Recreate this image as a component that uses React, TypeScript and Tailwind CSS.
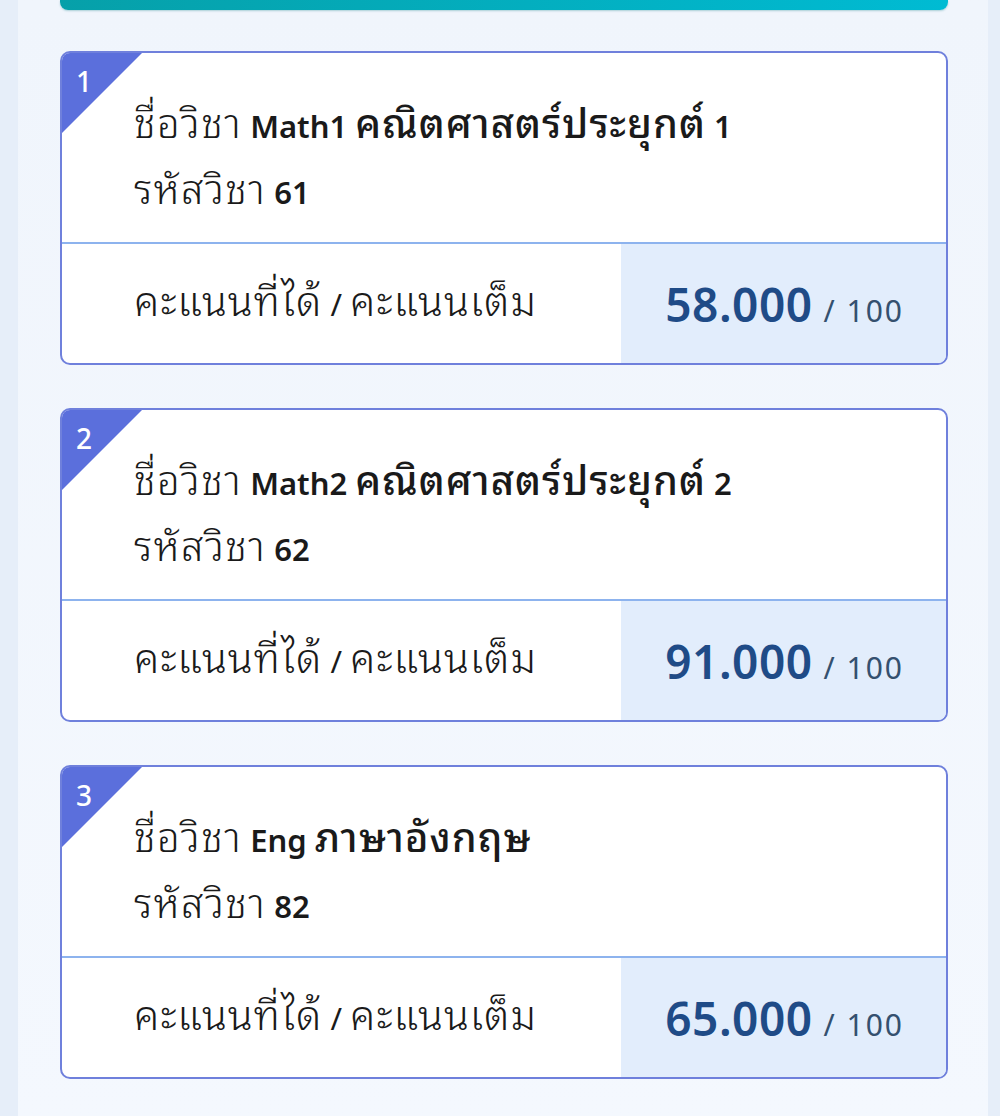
import React from "react";

const courses = [
  { no: 1, name: "Math1 คณิตศาสตร์ประยุกต์ 1", code: "61", score: "58.000", full: "100" },
  { no: 2, name: "Math2 คณิตศาสตร์ประยุกต์ 2", code: "62", score: "91.000", full: "100" },
  { no: 3, name: "Eng ภาษาอังกฤษ", code: "82", score: "65.000", full: "100" },
];

const thaiStyle = { fontFamily: '"Noto Sans Thai Looped", "Noto Sans Thai", sans-serif' };

type Kind = "label" | "value" | "score";

const thaiClass: Record<Kind, string> = {
  label: "text-[40px] font-[350] leading-none tracking-[1.5px]",
  value: "text-[40px] font-[530] leading-none tracking-[1px]",
  score: "text-[41px] font-[350] leading-none tracking-[1px]",
};

function Mixed({ text, kind }: { text: string; kind: Kind }) {
  const parts = text.split(/([\u0E00-\u0E7F]+)/).filter((p) => p.length > 0);
  return (
    <>
      {parts.map((p, i) =>
        /[\u0E00-\u0E7F]/.test(p) ? (
          <span key={i} className={thaiClass[kind]} style={thaiStyle}>
            {p}
          </span>
        ) : (
          <span key={i}>{p}</span>
        )
      )}
    </>
  );
}

function Card({ c }: { c: (typeof courses)[number] }) {
  return (
    <div className="relative overflow-hidden rounded-[10px] border-2 border-[#6f80dc] bg-white">
      <div className="absolute left-0 top-0 h-[80px] w-[80px] bg-[#5b6fdc] [clip-path:polygon(0_0,100%_0,0_100%)]" />
      <div className="absolute left-[14px] top-[14px] text-[28px] font-medium leading-none text-white">{c.no}</div>
      <div className="h-[189px] pl-[72px] pt-[40px] text-[31px] leading-[66px] text-[#1a1a1a]">
        <div className="whitespace-nowrap">
          <span className="font-normal">
            <Mixed text="ชื่อวิชา " kind="label" />
          </span>
          <span className="font-semibold">
            <Mixed text={c.name} kind="value" />
          </span>
        </div>
        <div className="whitespace-nowrap">
          <span className="font-normal">
            <Mixed text="รหัสวิชา " kind="label" />
          </span>
          <span className="font-semibold">{c.code}</span>
        </div>
      </div>
      <div className="h-[2px] bg-[#8db3ee]" />
      <div className="flex h-[119px]">
        <div className="flex flex-1 items-center pb-[2px] pl-[72px] text-[31px] text-[#1a1a1a]">
          <div className="whitespace-nowrap">
            <Mixed text="คะแนนที่ได้ / คะแนนเต็ม" kind="score" />
          </div>
        </div>
        <div className="flex w-[325px] items-center justify-end bg-[#e2edfc] pr-[42px]">
          <div className="flex items-baseline">
            <span className="text-[46px] font-semibold leading-none tracking-[0.5px] text-[#1f4b87]">{c.score}</span>
            <span className="ml-[11px] text-[30px] leading-none tracking-[2px] text-[#34506f]">/ {c.full}</span>
          </div>
        </div>
      </div>
    </div>
  );
}

export default function App() {
  return (
    <div
      className="min-h-[1116px] w-full bg-[#e6eef9]"
      style={{ fontFamily: '"Noto Sans", "Noto Sans Thai Looped", sans-serif' }}
    >
      <div className="ml-[18px] min-h-[1116px] w-[970px] bg-gradient-to-b from-[#f0f5fc] to-[#f4f8fe] pl-[42px] pr-[40px]">
        <div className="h-[10px] rounded-b-[8px] bg-gradient-to-r from-[#06a0a9] to-[#00bbd3] shadow-[0_1px_2px_rgba(0,120,130,0.3)]" />
        <div className="mt-[41px] flex flex-col gap-[43px]">
          {courses.map((c) => (
            <Card key={c.no} c={c} />
          ))}
        </div>
      </div>
    </div>
  );
}
